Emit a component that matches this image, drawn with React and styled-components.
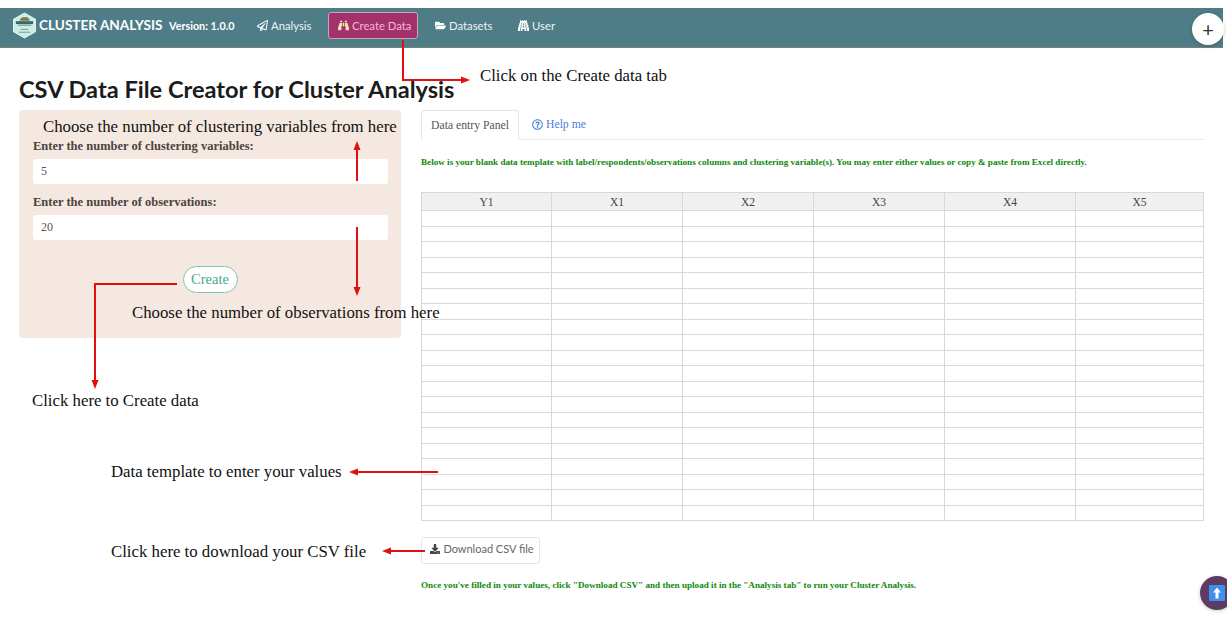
import React from "react";
import styled, { createGlobalStyle } from "styled-components";
import { FaRegPaperPlane, FaBinoculars, FaFolderOpen, FaGopuram, FaDownload, FaRegQuestionCircle } from "react-icons/fa";

const Global = createGlobalStyle`
  html, body { margin: 0; padding: 0; background: #fff; overflow: hidden; }
  * { box-sizing: border-box; }
`;
const SERIF = `"Liberation Serif", Georgia, serif`;
const SANS = `Lato, "Open Sans", sans-serif`;

const Page = styled.div`
  position: relative;
  width: 1227px;
  height: 626px;
  padding-top: 8px;
  overflow: hidden;
  font-family: ${SERIF};
`;
const NavBar = styled.nav`
  display: flex;
  align-items: center;
  width: 1223px;
  height: 40px;
  padding: 0 0 5px 13px;
  background: #4e7d88;
  border-bottom: 1px solid #7a7f78;
  font-family: ${SANS};
  color: #fff;
`;
const Brand = styled.div`
  font-size: 13.6px;
  font-weight: 700;
  margin-left: 3px;
  width: 130px;
  white-space: nowrap;
`;
const Version = styled.div`
  font-size: 10.8px;
  font-weight: 700;
  width: 70px;
  margin-right: 18px;
  white-space: nowrap;
`;
const NavItem = styled.div`
  display: flex;
  align-items: center;
  gap: 3px;
  height: 27px;
  padding: 0 ${(p) => (p.$active ? "9px" : "0")};
  margin-right: ${(p) => p.$gap}px;
  width: ${(p) => p.$w}px;
  font-size: 11.3px;
  white-space: nowrap;
  color: ${(p) => (p.$active ? "#f3b6cf" : "#eef4f5")};
  background: ${(p) => (p.$active ? "#a3316b" : "transparent")};
  border: ${(p) => (p.$active ? "1px solid #c9a5b8" : "none")};
  border-radius: 3px;
  svg { font-size: 11px; flex: none; color: ${(p) => (p.$active ? "#f6e3b5" : "#fff")}; }
`;
const Title = styled.h1`
  margin: 28px 0 7px 19px;
  font-family: ${SANS};
  font-size: 23.6px;
  line-height: 27px;
  font-weight: 700;
  color: #1b1b1b;
`;
const Columns = styled.div`
  display: flex;
  align-items: flex-start;
  padding-left: 19px;
  gap: 20px;
`;
const SidePanel = styled.section`
  display: flex;
  flex-direction: column;
  width: 382px;
  height: 228px;
  padding: 29px 13px 0 14px;
  background: #f5e8e1;
  border-radius: 4px;
`;
const FieldLabel = styled.label`
  font-size: 12.5px;
  line-height: 14px;
  font-weight: 700;
  color: #4a4442;
  margin-bottom: 6px;
`;
const NumberField = styled.div`
  display: flex;
  align-items: center;
  height: 25px;
  padding-left: 8px;
  margin-bottom: 11px;
  background: #fff;
  border-radius: 3px;
  font-size: 12px;
  color: #555;
`;
const CreateButton = styled.div`
  align-self: center;
  display: flex;
  align-items: center;
  justify-content: center;
  width: 55px;
  height: 27px;
  margin: 15px 0 0 -1px;
  background: #fff;
  border: 1px solid #80c6ab;
  border-radius: 14px;
  color: #43ad89;
  font-size: 14.5px;
`;
const MainPanel = styled.section`
  width: 783px;
`;
const Tabs = styled.div`
  display: flex;
  align-items: stretch;
  height: 30px;
  border-bottom: 1px solid #eaeaea;
  font-size: 11.7px;
`;
const ActiveTab = styled.div`
  display: flex;
  align-items: center;
  justify-content: center;
  width: 98px;
  height: 30px;
  background: #fff;
  border: 1px solid #e6e6e6;
  border-bottom: none;
  border-radius: 3px 3px 0 0;
  color: #555;
`;
const HelpTab = styled.div`
  display: flex;
  align-items: center;
  gap: 3px;
  margin-left: 13px;
  color: #4a80d8;
  svg { font-size: 11px; }
`;
const Note = styled.p`
  margin: ${(p) => p.$m};
  color: #0b8a0b;
  font-size: 9.15px;
  line-height: 11px;
  font-weight: 700;
  white-space: nowrap;
`;
const Grid = styled.table`
  width: 782px;
  table-layout: fixed;
  border-collapse: collapse;
  border: 1px solid #d4d4d4;
`;
const HeadCell = styled.th`
  height: 18px;
  padding: 0;
  background: #f0f0f0;
  border: 1px solid #d8d8d8;
  font-size: 11.5px;
  font-weight: 400;
  color: #444;
`;
const Cell = styled.td`
  height: 15.5px;
  padding: 0;
  border: 1px solid #d8d8d8;
`;
const DownloadButton = styled.div`
  display: flex;
  align-items: center;
  justify-content: center;
  gap: 3px;
  width: 119px;
  height: 27px;
  margin-top: 16px;
  padding: 0 0 4px 3px;
  border: 1px solid #e6e6e6;
  border-radius: 3px;
  font-family: ${SANS};
  font-size: 11px;
  color: #666;
  svg { font-size: 10px; color: #444; }
`;
const Callout = styled.div`
  position: absolute;
  left: ${(p) => p.$x}px;
  top: ${(p) => p.$y}px;
  font-family: ${SERIF};
  font-size: 16.8px;
  line-height: 18px;
  color: #111;
  white-space: nowrap;
`;
const ArrowLayer = styled.svg`
  position: absolute;
  left: 0;
  top: 0;
  pointer-events: none;
`;
const PlusFab = styled.div`
  position: absolute;
  left: 1192px;
  top: 13px;
  width: 32px;
  height: 32px;
  display: flex;
  align-items: center;
  justify-content: center;
  background: #fff;
  border-radius: 50%;
  box-shadow: 0 1px 4px rgba(0,0,0,.2);
  color: #333;
  font-family: ${SANS};
  font-size: 20px;
`;
const TopFab = styled.div`
  position: absolute;
  left: 1200px;
  top: 576px;
  width: 34px;
  height: 34px;
  padding-left: 9px;
  display: flex;
  align-items: center;
  background: #5e3b60;
  border-radius: 50%;
  box-shadow: 0 1px 4px rgba(0,0,0,.2);
`;

const Logo = () => (
  <svg width="23" height="27" viewBox="0 0 24 27">
    <polygon points="12,0.5 23.5,7 23.5,20 12,26.5 0.5,20 0.5,7" fill="#c9f0e2" stroke="#e6f7f0" />
    <path d="M7 8.5 Q8 4 12 5 Q16 3.5 17.5 8.5 Z" fill="#7c7a55" />
    <rect x="3" y="9" width="18" height="3" fill="#3c6570" />
    <rect x="5" y="12.5" width="14" height="1.5" fill="#8aa7a8" />
    <rect x="8" y="17" width="8" height="1" fill="#6f9a90" />
    <rect x="6" y="20" width="12" height="1" fill="#6f9a90" />
  </svg>
);
const ArrowUpIcon = () => (
  <svg width="16" height="16" viewBox="0 0 16 16">
    <rect width="16" height="16" rx="1" fill="#3f8ff0" />
    <path d="M8 2.5 L12 7.5 H9.5 V13.5 H6.5 V7.5 H4 Z" fill="#fff" />
  </svg>
);

const heads = ["Y1", "X1", "X2", "X3", "X4", "X5"];
const widths = [130, 131, 131, 131, 131, 128];
const rows = Array.from({ length: 20 }, (_, i) => i);

export default function App() {
  return (
    <Page>
      <Global />
      <NavBar>
        <Logo />
        <Brand>CLUSTER ANALYSIS</Brand>
        <Version>Version: 1.0.0</Version>
        <NavItem $gap={16} $w={55}><FaRegPaperPlane />Analysis</NavItem>
        <NavItem $active $gap={17} $w={90}><FaBinoculars />Create Data</NavItem>
        <NavItem $gap={26} $w={57}><FaFolderOpen />Datasets</NavItem>
        <NavItem $gap={0} $w={40}><FaGopuram />User</NavItem>
      </NavBar>
      <Title>CSV Data File Creator for Cluster Analysis</Title>
      <Columns>
        <SidePanel>
          <FieldLabel>Enter the number of clustering variables:</FieldLabel>
          <NumberField>5</NumberField>
          <FieldLabel>Enter the number of observations:</FieldLabel>
          <NumberField>20</NumberField>
          <CreateButton>Create</CreateButton>
        </SidePanel>
        <MainPanel>
          <Tabs>
            <ActiveTab>Data entry Panel</ActiveTab>
            <HelpTab><FaRegQuestionCircle />Help me</HelpTab>
          </Tabs>
          <Note $m="17px 0 24px">Below is your blank data template with label/respondents/observations columns and clustering variable(s). You may enter either values or copy &amp; paste from Excel directly.</Note>
          <Grid>
            <colgroup>{widths.map((w, i) => <col key={i} style={{ width: w }} />)}</colgroup>
            <thead><tr>{heads.map((h) => <HeadCell key={h}>{h}</HeadCell>)}</tr></thead>
            <tbody>
              {rows.map((r) => <tr key={r}>{heads.map((h) => <Cell key={h} />)}</tr>)}
            </tbody>
          </Grid>
          <DownloadButton><FaDownload />Download CSV file</DownloadButton>
          <Note $m="16px 0 0">Once you've filled in your values, click "Download CSV" and then upload it in the "Analysis tab" to run your Cluster Analysis.</Note>
        </MainPanel>
      </Columns>

      <ArrowLayer width="1227" height="626" viewBox="0 0 1227 626" fill="none" stroke="#e01010" strokeWidth="2">
        <path d="M403 40 V80 H462" />
        <path d="M470 80 L461 76.5 V83.5 Z" fill="#e01010" stroke="none" />
        <path d="M357 181 V148" />
        <path d="M357 141 L353.5 150 H360.5 Z" fill="#e01010" stroke="none" />
        <path d="M357 227 V288" />
        <path d="M357 296 L353.5 287 H360.5 Z" fill="#e01010" stroke="none" />
        <path d="M177 284 H95 V381" />
        <path d="M95 389 L91.5 380 H98.5 Z" fill="#e01010" stroke="none" />
        <path d="M438 472 H357" />
        <path d="M349 472 L358 468.5 V475.5 Z" fill="#e01010" stroke="none" />
        <path d="M425 551 H390" />
        <path d="M382 551 L391 547.5 V554.5 Z" fill="#e01010" stroke="none" />
      </ArrowLayer>

      <Callout $x={480} $y={67}>Click on the Create data tab</Callout>
      <Callout $x={43} $y={118}>Choose the number of clustering variables from here</Callout>
      <Callout $x={132} $y={304}>Choose the number of observations from here</Callout>
      <Callout $x={32} $y={392}>Click here to Create data</Callout>
      <Callout $x={111} $y={463}>Data template to enter your values</Callout>
      <Callout $x={111} $y={543}>Click here to download your CSV file</Callout>

      <PlusFab>+</PlusFab>
      <TopFab><ArrowUpIcon /></TopFab>
    </Page>
  );
}
